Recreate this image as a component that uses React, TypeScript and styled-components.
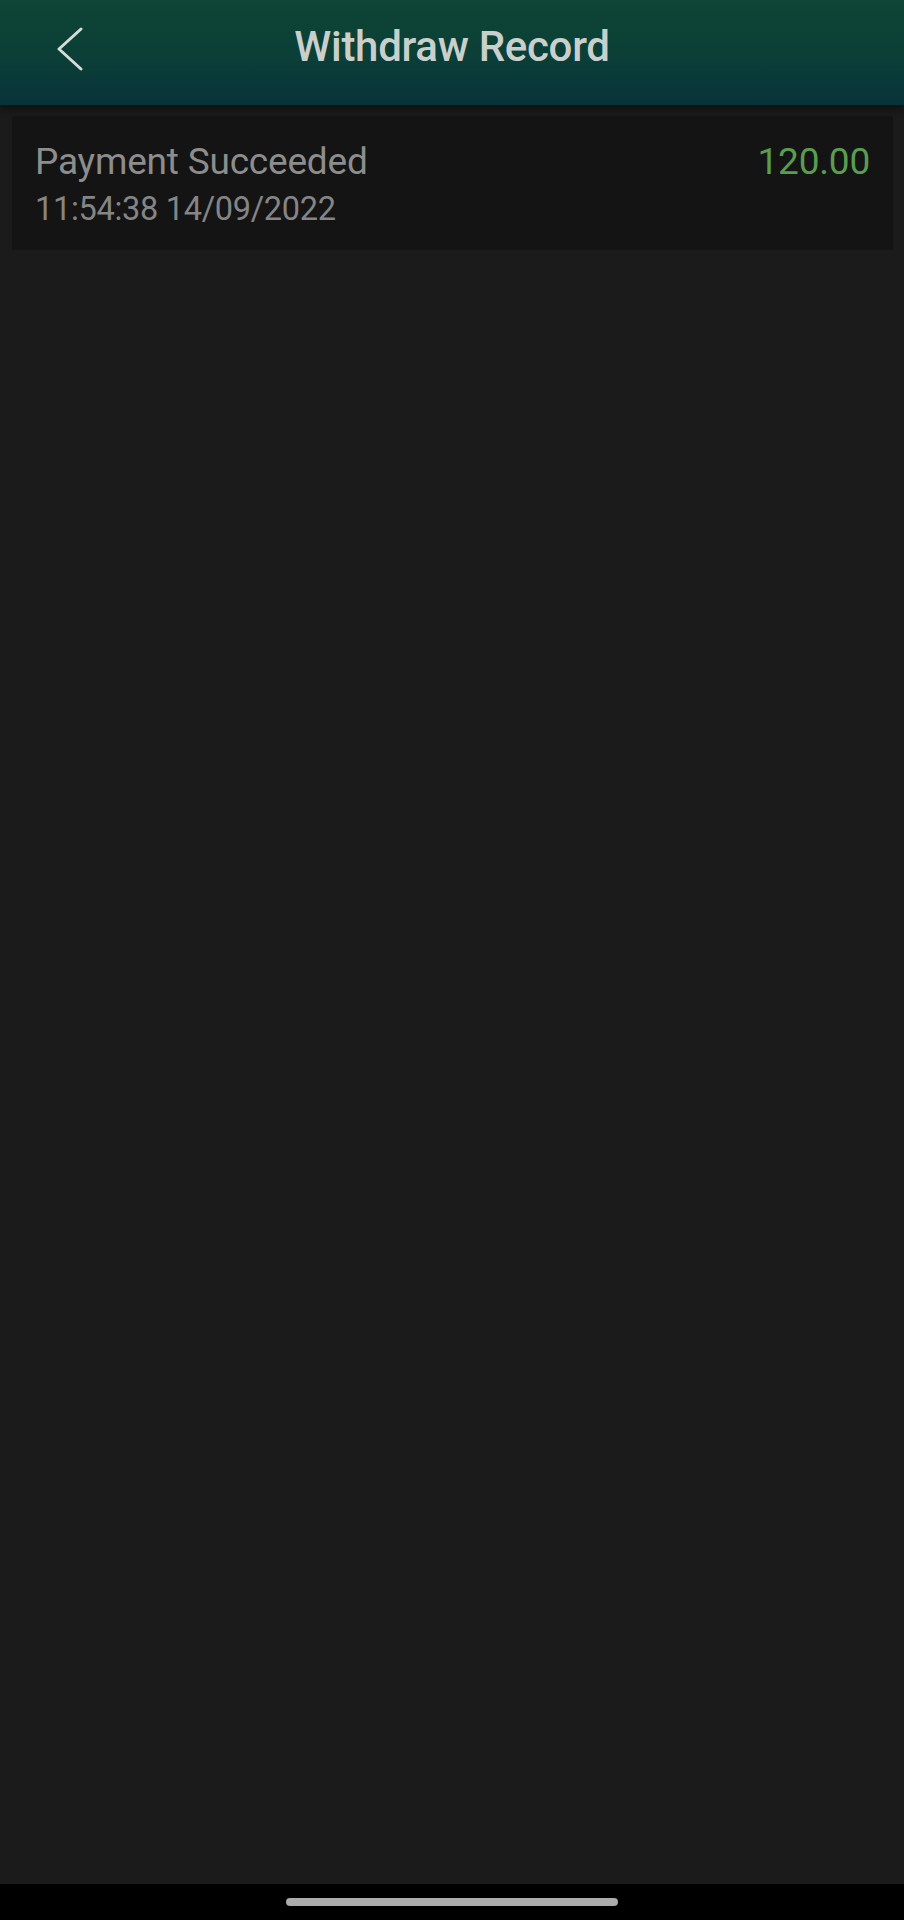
import React from 'react';
import styled, { createGlobalStyle } from 'styled-components';

const GlobalStyle = createGlobalStyle`
  html, body {
    margin: 0;
    padding: 0;
    background: #1b1b1b;
  }
  body {
    font-family: Roboto, "Noto Sans", sans-serif;
  }
`;

const Screen = styled.div`
  width: 904px;
  height: 1920px;
  display: flex;
  flex-direction: column;
  background: #1b1b1b;
`;

const Header = styled.header`
  height: 105px;
  flex-shrink: 0;
  display: flex;
  align-items: center;
  position: relative;
  background: linear-gradient(180deg, #0e4536 0%, #0b3f37 55%, #07333a 100%);
  box-shadow: 0 4px 8px rgba(0, 0, 0, 0.45);
  z-index: 1;
`;

const BackButton = styled.button`
  width: 60px;
  height: 60px;
  margin-left: 40px;
  margin-top: -8px;
  padding: 0;
  border: none;
  background: transparent;
  display: flex;
  align-items: center;
  justify-content: center;
`;

const Title = styled.h1`
  position: absolute;
  left: 0;
  right: 0;
  top: 22px;
  margin: 0;
  text-align: center;
  font-size: 42px;
  line-height: 49px;
  font-weight: 500;
  letter-spacing: -0.3px;
  color: #c9d0cc;
  pointer-events: none;
`;

const Content = styled.main`
  flex: 1;
  padding: 11px 11px 0 12px;
`;

const RecordCard = styled.div`
  height: 134px;
  box-sizing: border-box;
  padding: 24px 23px 0 23px;
  background: #141414;
  border-radius: 2px;
  display: flex;
  justify-content: space-between;
  align-items: flex-start;
`;

const RecordInfo = styled.div`
  display: flex;
  flex-direction: column;
  gap: 5px;
`;

const Status = styled.div`
  font-size: 37px;
  line-height: 44px;
  color: #8d8d8d;
  letter-spacing: -0.2px;
`;

const Time = styled.div`
  font-size: 32.5px;
  line-height: 40px;
  color: #858585;
  letter-spacing: -0.3px;
`;

const Amount = styled.div`
  font-size: 37px;
  line-height: 44px;
  color: #5a9c50;
  letter-spacing: -0.2px;
`;

const NavBar = styled.div`
  height: 36px;
  flex-shrink: 0;
  background: #000;
  display: flex;
  justify-content: center;
  align-items: center;
`;

const HomeIndicator = styled.div`
  width: 332px;
  height: 8px;
  border-radius: 4px;
  background: #acacac;
`;

const records = [
  { status: 'Payment Succeeded', time: '11:54:38 14/09/2022', amount: '120.00' },
];

const App: React.FC = () => (
  <>
    <GlobalStyle />
    <Screen>
      <Header>
        <BackButton aria-label="Back">
          <svg width="30" height="44" viewBox="0 0 30 44" fill="none">
            <path d="M26 2 L4 22 L26 42" stroke="#d6dcd8" strokeWidth="3" strokeLinecap="round" strokeLinejoin="round" />
          </svg>
        </BackButton>
        <Title>Withdraw Record</Title>
      </Header>
      <Content>
        {records.map((r) => (
          <RecordCard key={r.time}>
            <RecordInfo>
              <Status>{r.status}</Status>
              <Time>{r.time}</Time>
            </RecordInfo>
            <Amount>{r.amount}</Amount>
          </RecordCard>
        ))}
      </Content>
      <NavBar>
        <HomeIndicator />
      </NavBar>
    </Screen>
  </>
);

export default App;
